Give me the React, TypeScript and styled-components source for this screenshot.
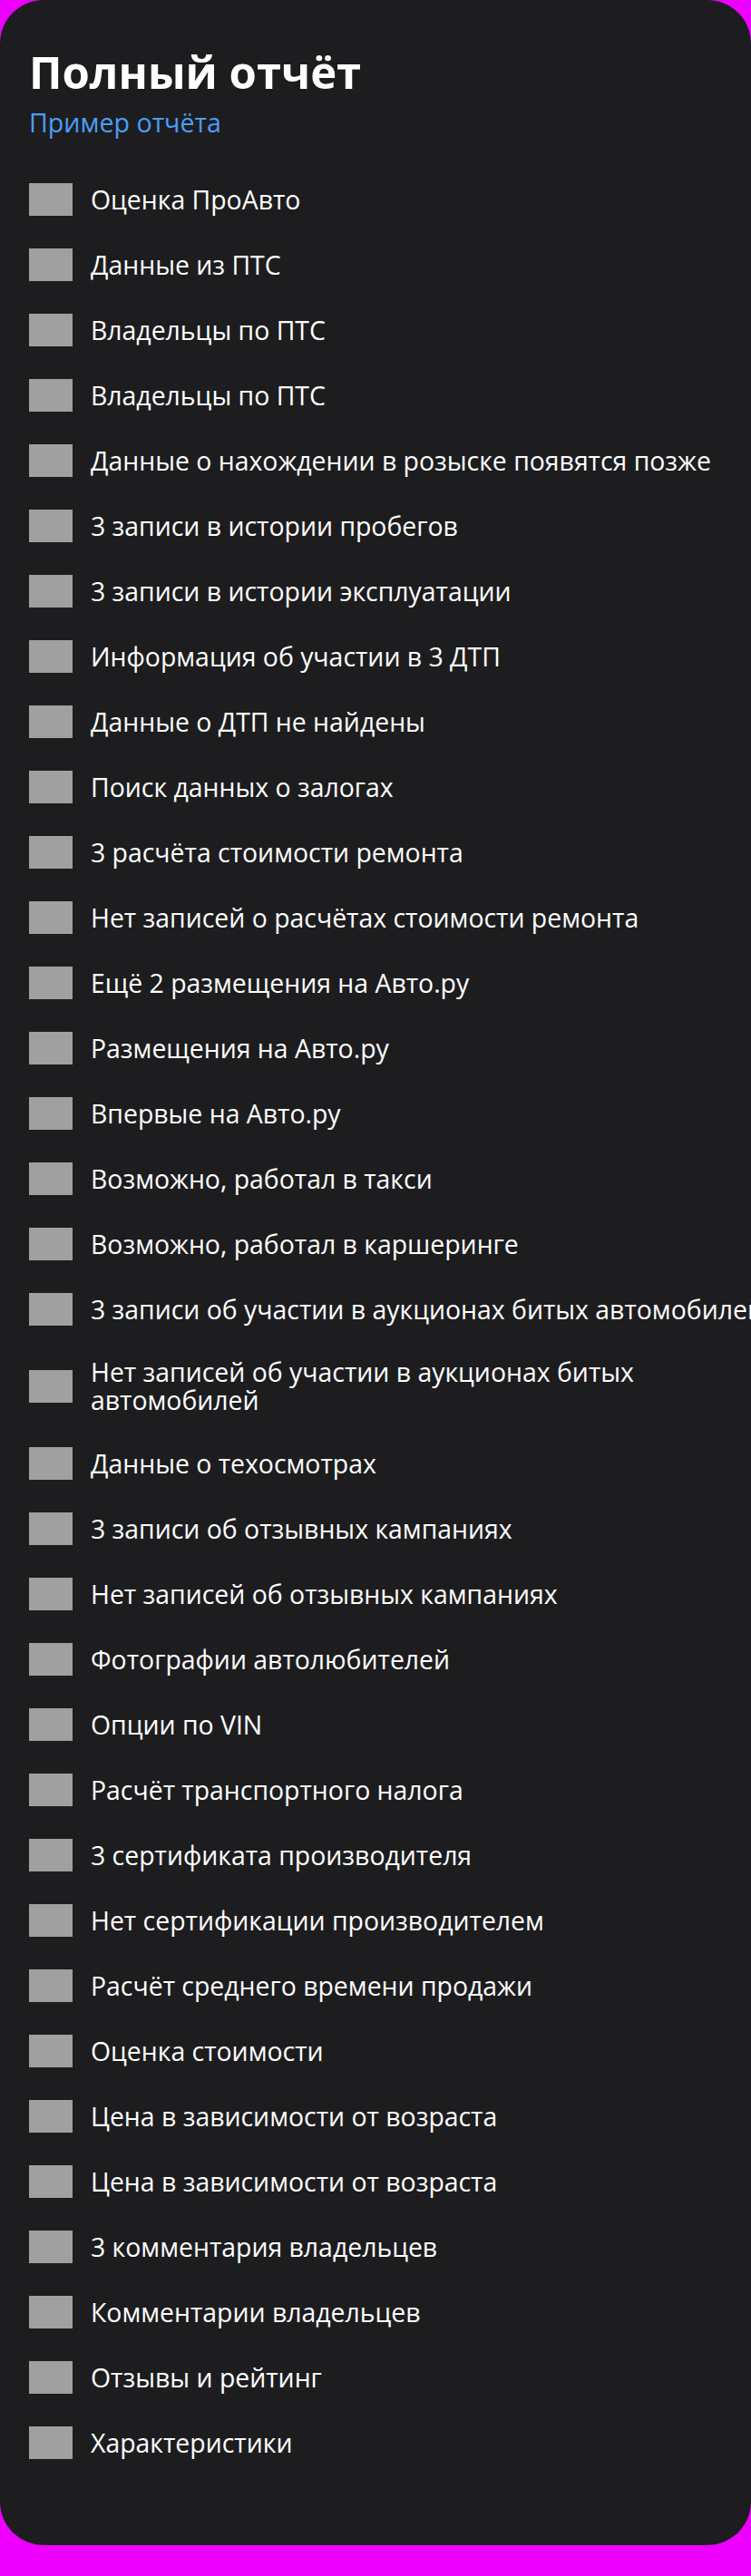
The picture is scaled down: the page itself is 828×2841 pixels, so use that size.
import * as React from 'react';
import styled, { createGlobalStyle } from 'styled-components';

interface Feature {
	title: string;
	noWrap?: boolean;
}

const features: Feature[] = [
	{ title: 'Оценка ПроАвто' },
	{ title: 'Данные из ПТС' },
	{ title: 'Владельцы по ПТС' },
	{ title: 'Владельцы по ПТС' },
	{ title: 'Данные о нахождении в розыске появятся позже' },
	{ title: '3 записи в истории пробегов' },
	{ title: '3 записи в истории эксплуатации' },
	{ title: 'Информация об участии в 3 ДТП' },
	{ title: 'Данные о ДТП не найдены' },
	{ title: 'Поиск данных о залогах' },
	{ title: '3 расчёта стоимости ремонта' },
	{ title: 'Нет записей о расчётах стоимости ремонта' },
	{ title: 'Ещё 2 размещения на Авто.ру' },
	{ title: 'Размещения на Авто.ру' },
	{ title: 'Впервые на Авто.ру' },
	{ title: 'Возможно, работал в такси' },
	{ title: 'Возможно, работал в каршеринге' },
	{ title: '3 записи об участии в аукционах битых автомобилей', noWrap: true },
	{ title: 'Нет записей об участии в аукционах битых автомобилей' },
	{ title: 'Данные о техосмотрах' },
	{ title: '3 записи об отзывных кампаниях' },
	{ title: 'Нет записей об отзывных кампаниях' },
	{ title: 'Фотографии автолюбителей' },
	{ title: 'Опции по VIN' },
	{ title: 'Расчёт транспортного налога' },
	{ title: '3 сертификата производителя' },
	{ title: 'Нет сертификации производителем' },
	{ title: 'Расчёт среднего времени продажи' },
	{ title: 'Оценка стоимости' },
	{ title: 'Цена в зависимости от возраста' },
	{ title: 'Цена в зависимости от возраста' },
	{ title: '3 комментария владельцев' },
	{ title: 'Комментарии владельцев' },
	{ title: 'Отзывы и рейтинг' },
	{ title: 'Характеристики' },
];

const App = () => {
	return (
		<>
			<GlobalStyle />
			<Card>
				<Header>
					<Title>Полный отчёт</Title>
					<SampleLink href="#">Пример отчёта</SampleLink>
				</Header>
				<FeatureList>
					{features.map((f, i) => (
						<FeatureRow key={i}>
							<FeatureIcon />
							<FeatureText $noWrap={f.noWrap}>{f.title}</FeatureText>
						</FeatureRow>
					))}
				</FeatureList>
			</Card>
		</>
	);
};

export default App;

const fontStack = '"Open Sans", "Noto Sans", sans-serif';

const GlobalStyle = createGlobalStyle`
	html, body {
		margin: 0;
		padding: 0;
		background-color: #ee00ff;
	}
	body {
		font-family: ${fontStack};
		-webkit-font-smoothing: antialiased;
	}
`;

const Card = styled.div`
	box-sizing: border-box;
	width: 828px;
	height: 2807px;
	padding: 50px 32px 0;
	background-color: #1d1d1f;
	border-radius: 48px;
	overflow: hidden;
	color: #fff;
`;

const Header = styled.div`
	display: flex;
	flex-direction: column;
	align-items: flex-start;
`;

const Title = styled.h1`
	margin: 0;
	font-size: 49px;
	line-height: 58px;
	font-weight: 700;
	color: #fff;
`;

const SampleLink = styled.a`
	margin-top: 9px;
	font-size: 28.6px;
	line-height: 36px;
	color: #4a9df8;
	text-decoration: none;
`;

const FeatureList = styled.div`
	display: flex;
	flex-direction: column;
	gap: 36px;
	margin-top: 49px;
`;

const FeatureRow = styled.div`
	display: flex;
	align-items: center;
	min-height: 36px;
`;

const FeatureIcon = styled.div`
	flex: none;
	width: 48px;
	height: 36px;
	margin-right: 20px;
	background-color: #a0a0a0;
`;

const FeatureText = styled.div<{ $noWrap?: boolean }>`
	font-size: 28.4px;
	line-height: 31px;
	color: #fff;
	white-space: ${p => (p.$noWrap ? 'nowrap' : 'normal')};
`;
